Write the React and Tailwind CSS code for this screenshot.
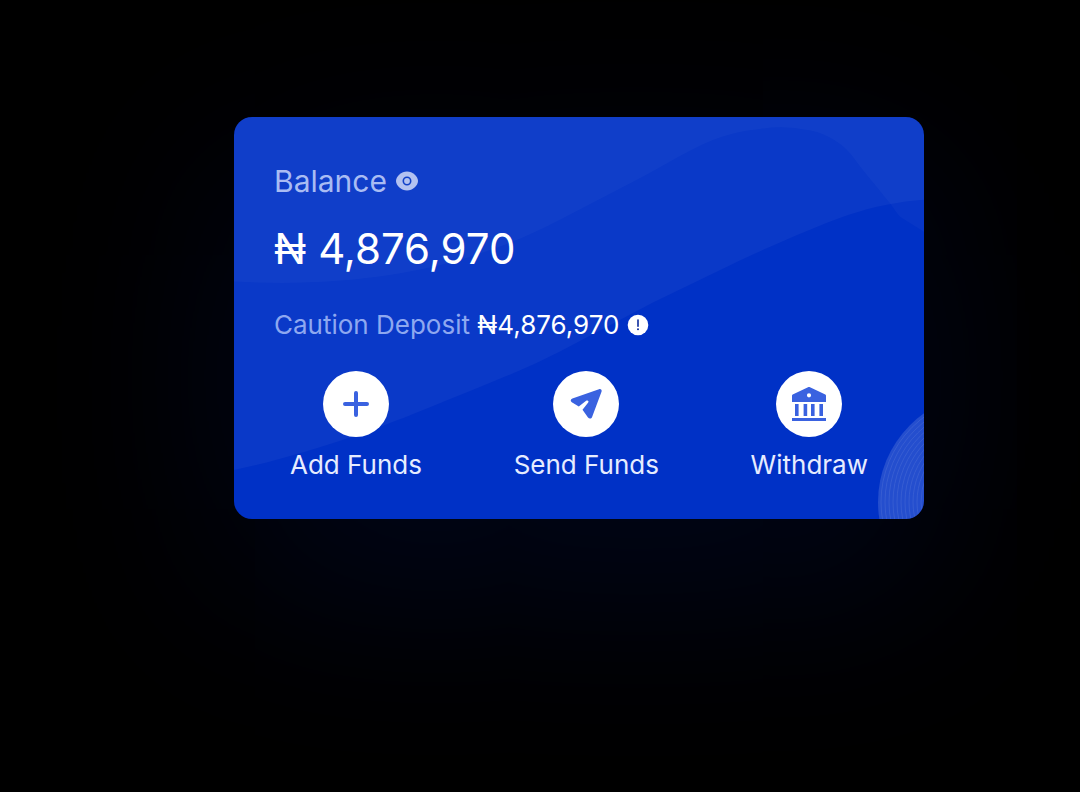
const actions = [
  { label: 'Add Funds', icon: PlusIcon },
  { label: 'Send Funds', icon: SendIcon },
  { label: 'Withdraw', icon: BankIcon },
];

// radii of the thin rings in the card's corner
const rings = [106, 102, 98, 94, 90, 86, 82, 78, 74, 70, 66];

function PlusIcon() {
  return (
    <svg viewBox="0 0 36 36" className="size-9" fill="none" stroke="#3a62e0" strokeWidth="4" strokeLinecap="round" aria-hidden="true">
      <path d="M18 7v22M7 18h22" />
    </svg>
  );
}

function SendIcon() {
  return (
    <svg viewBox="0 0 36 36" className="size-9" aria-hidden="true">
      <path
        d="M31 3.2 4.4 12.6c-2 .8-2.200 2.700-.6 3.700l7 4.200 7-5.600c2-1.300 3.600.2 2.200 1.900l-5.500 7 5.500 7.600c1.200 1.700 3.400 1.500 4.100-.5L33.600 5.600c.5-1.700-.9-3-2.600-2.400Z"
        fill="#3a62e0"
      />
    </svg>
  );
}

function BankIcon() {
  return (
    <svg viewBox="0 0 36 36" className="size-9" fill="#3a62e0" aria-hidden="true">
      <path
        fillRule="evenodd"
        d="M17 1.300c.6-.3 1.400-.3 2 0l15.300 7.200c.5.300.7.700.7 1.200V16H1V9.700c0-.5.200-.9.700-1.200L17 1.300ZM18 7.200a2.100 2.100 0 1 0 0 4.200 2.100 2.100 0 0 0 0-4.200Z"
      />
      <path d="M4 18h3.600v12H4zM12.600 18h3.600v12h-3.600zM20 18h3.600v12H20zM28.400 18H32v12h-3.600zM1 32h34v3H1z" />
    </svg>
  );
}

function EyeIcon() {
  return (
    <svg viewBox="0 0 24 24" className="size-6" aria-hidden="true">
      <path d="M12 2.500C6.500 2.500 1 7.500 1 12s5.500 9.500 11 9.500S23 16.500 23 12 17.500 2.500 12 2.500Z" fill="#b3c2f1" />
      <circle cx="12" cy="12" r="3.700" fill="none" stroke="#1040c8" strokeWidth="1.600" />
    </svg>
  );
}

function InfoIcon() {
  return (
    <svg viewBox="0 0 22 22" className="size-[22px]" aria-hidden="true">
      <circle cx="11" cy="11" r="10.300" fill="#fff" />
      <path d="M11 6v6.200" stroke="#0a2a9c" strokeWidth="1.600" strokeLinecap="round" />
      <circle cx="11" cy="15.200" r="1" fill="#0a2a9c" />
    </svg>
  );
}

function CardBackground() {
  return (
    <svg viewBox="0 0 690 403" preserveAspectRatio="none" className="absolute inset-0 size-full" aria-hidden="true">
      <path
        d="M0 0H690V83Q672 84 653 88C626 93 600 103 576 113C547 125 520 137 493 150L419 186L326 235C285 256 240 273 196 291C150 310 75 338 0 354Z"
        fill="#fff"
        fillOpacity="0.04"
      />
      <path
        d="M0 0H690V115L666 100C660 93 660 91 653 83C640 66 628 53 619 40C610 27 590 15 573 13Q550 8 526 12C505 14 490 19 479 23C452 34 430 49 403 63L326 103C250 143 150 173 0 165Z"
        fill="#fff"
        fillOpacity="0.026"
      />
      <circle cx="753" cy="386" r="109" fill="#fff" fillOpacity="0.14" />
      <g fill="none" stroke="#fff" strokeOpacity="0.09">
        {rings.map((r) => (
          <circle key={r} cx="753" cy="386" r={r} />
        ))}
      </g>
    </svg>
  );
}

const App = () => {
  return (
    <main className="min-h-screen bg-black pt-[117px] pr-[156px] pb-16 pl-[234px] font-['Inter',sans-serif]">
      <section className="relative overflow-hidden rounded-[18px] bg-[#0031c6] px-10 pt-11 pb-[38px] shadow-[0_60px_200px_rgba(0,49,198,0.15)]">
        <CardBackground />

        <div className="relative">
          <div className="flex items-center gap-2 text-[#a9bcf3]">
            <h1 className="text-[30px] leading-10">Balance</h1>
            <button type="button" aria-label="Hide balance">
              <EyeIcon />
            </button>
          </div>

          <p className="mt-5 text-[42px] leading-[56px] text-white">₦ 4,876,970</p>

          <div className="mt-8 flex items-center gap-2 text-[26px] leading-8">
            <p className="text-[#8ea8f0]">
              Caution Deposit <span className="text-white">₦4,876,970</span>
            </p>
            <button type="button" aria-label="About the caution deposit">
              <InfoIcon />
            </button>
          </div>

          <div className="mt-[30px] flex justify-between px-4">
            {actions.map(({ label, icon: Icon }) => (
              <button key={label} type="button" className="flex flex-col items-center gap-3">
                <span className="flex size-[66px] items-center justify-center rounded-full bg-white">
                  <Icon />
                </span>
                <span className="text-[26px] leading-8 text-[#e6ecff]">{label}</span>
              </button>
            ))}
          </div>
        </div>
      </section>
    </main>
  );
};

export default App;
